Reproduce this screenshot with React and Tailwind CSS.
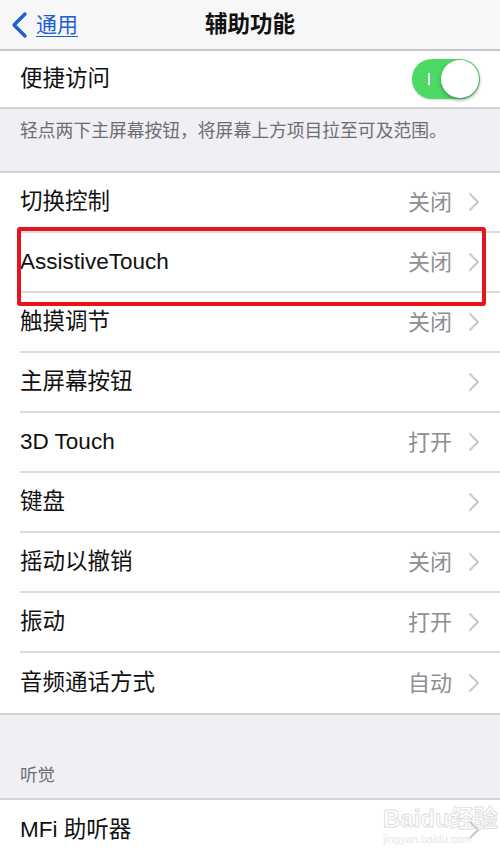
import React from "react";

const font = { fontFamily: '"Liberation Sans","Noto Sans CJK SC",sans-serif' };

function Chevron() {
  return (
    <svg width="12" height="20" viewBox="0 0 12 20" className="ml-[16px]">
      <path d="M2 2 L10 10 L2 18" fill="none" stroke="#c7c7cc" strokeWidth="2" strokeLinecap="round" strokeLinejoin="round" />
    </svg>
  );
}

function Row({ label, value, last }) {
  return (
    <div className="flex h-[60px] items-center pl-5">
      <div className={`flex h-full flex-1 items-center pr-[20px] ${last ? "" : "border-b-2 border-[#dcdce0]"}`}>
        <span className="flex-1 text-[22.5px] text-[#111]">{value === null ? label : label}</span>
        {value && <span className="text-[22px] text-[#8e8e93]">{value}</span>}
        <Chevron />
      </div>
    </div>
  );
}

export default function App() {
  const rows = [
    ["切换控制", "关闭"],
    ["AssistiveTouch", "关闭"],
    ["触摸调节", "关闭"],
    ["主屏幕按钮", ""],
    ["3D Touch", "打开"],
    ["键盘", ""],
    ["摇动以撤销", "关闭"],
    ["振动", "打开"],
    ["音频通话方式", "自动"],
  ];
  return (
    <div className="relative h-[853px] w-[500px] overflow-hidden bg-[#efeff4]" style={font}>
      {/* nav */}
      <div className="relative flex h-[51px] items-center justify-center border-b-2 border-[#c8c8cc] bg-[#f7f7f7]">
        <div className="absolute left-[10px] top-0 flex h-full items-center">
          <svg width="20" height="28" viewBox="0 0 20 28">
            <path d="M15 3 L4 14 L15 25" fill="none" stroke="#1c5fd4" strokeWidth="3.4" strokeLinecap="round" strokeLinejoin="round" />
          </svg>
          <span className="ml-[6px] text-[21px] text-[#1c5fd4] underline underline-offset-4 decoration-1">通用</span>
        </div>
        <span className="text-[22.5px] font-semibold text-[#111]">辅助功能</span>
      </div>

      {/* quick access */}
      <div className="flex h-[58px] items-center justify-between border-b-2 border-[#d4d4d8] bg-white pl-5 pr-5">
        <span className="text-[22.5px] text-[#111]">便捷访问</span>
        <div className="relative h-[40px] w-[68px] rounded-full bg-[#4cd964] shadow-[0_1px_2px_rgba(0,0,0,0.15)]">
          <div className="absolute left-[16px] top-[14px] h-[12px] w-[2px] bg-white" />
          <div className="absolute right-[1px] top-[1px] h-[38px] w-[38px] rounded-full bg-white shadow-[0_2px_4px_rgba(0,0,0,0.3)]" />
        </div>
      </div>

      <div className="h-[62px] pl-5 pt-[9px]">
        <span className="text-[17.8px] text-[#6d6d72]">轻点两下主屏幕按钮，将屏幕上方项目拉至可及范围。</span>
      </div>

      {/* list */}
      <div className="relative border-y-2 border-[#d4d4d8] bg-white">
        {rows.map(([l, v], i) => (
          <Row key={l} label={l} value={v} last={i === rows.length - 1} />
        ))}
        <div className="absolute left-[17px] top-[54px] h-[79px] w-[469px] rounded-[3px] border-[4px] border-[#e8141c]" />
      </div>

      <div className="flex h-[83px] items-end pb-[10px] pl-5">
        <span className="text-[17.5px] text-[#6d6d72]">听觉</span>
      </div>

      <div className="border-t-2 border-[#d4d4d8] bg-white">
        <Row label="MFi 助听器" value="" last />
      </div>

      {/* watermark */}
      <div className="pointer-events-none absolute left-[383px] top-[806px] flex flex-col items-start">
        <span className="text-[24px] font-bold leading-[26px]" style={{ WebkitTextStroke: "1px #e0e0e0", color: "transparent" }}>Baidu经验</span>
        <span className="text-[11px] leading-[14px] text-[#e6e6e6]">jingyan.baidu.com</span>
      </div>
    </div>
  );
}
